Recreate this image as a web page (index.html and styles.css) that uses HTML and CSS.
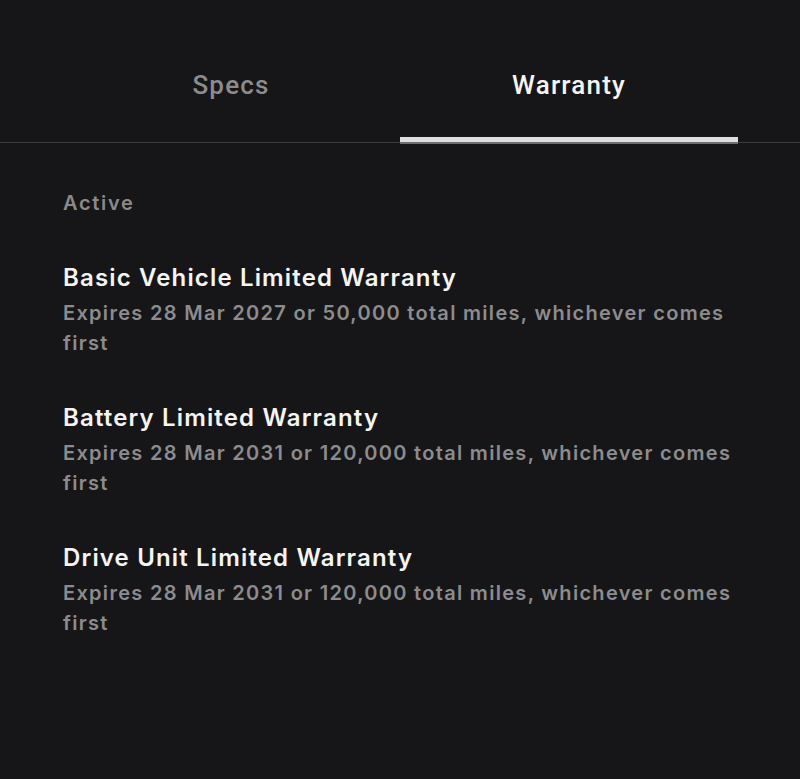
FILE: index.html
```html
<!DOCTYPE html>
<html lang="en">
<head>
  <meta charset="UTF-8">
  <title>Warranty</title>
  <link rel="stylesheet" href="styles.css">
</head>
<body>
  <div class="tabs">
    <div class="tab">Specs</div>
    <div class="tab active">Warranty</div>
  </div>

  <div class="content">
    <div class="section-label">Active</div>

    <div class="warranty">
      <div class="warranty-title">Basic Vehicle Limited Warranty</div>
      <div class="warranty-desc">Expires 28 Mar 2027 or 50,000 total miles, whichever comes first</div>
    </div>

    <div class="warranty">
      <div class="warranty-title">Battery Limited Warranty</div>
      <div class="warranty-desc">Expires 28 Mar 2031 or 120,000 total miles, whichever comes first</div>
    </div>

    <div class="warranty">
      <div class="warranty-title">Drive Unit Limited Warranty</div>
      <div class="warranty-desc">Expires 28 Mar 2031 or 120,000 total miles, whichever comes first</div>
    </div>
  </div>
</body>
</html>
```

FILE: styles.css
```css
body {
  margin: 0;
  background: #161618;
  color: #f2f2f2;
  font-family: Inter, "Liberation Sans", sans-serif;
  height: 779px;
  overflow: hidden;
}

.tabs {
  display: flex;
  padding: 0 62px;
  border-bottom: 1px solid #3a3a3c;
}

.tab {
  flex: 1;
  height: 142px;
  display: flex;
  align-items: center;
  justify-content: center;
  padding-top: 28px;
  box-sizing: border-box;
  font-family: Roboto, sans-serif;
  font-size: 26px;
  font-weight: 500;
  letter-spacing: 1.2px;
  color: #8c8c8e;
  position: relative;
}

.tab.active {
  color: #f4f4f4;
}

.tab.active::after {
  content: "";
  position: absolute;
  left: 0;
  right: 0;
  bottom: -2px;
  height: 5px;
  background: #dedede;
  border-bottom: 2px solid #6e6e70;
}

.content {
  padding: 48px 62px 0 63px;
}

.section-label {
  font-size: 20px;
  font-weight: 600;
  letter-spacing: 1.7px;
  color: #8a8a8c;
  margin-bottom: 48px;
}

.warranty {
  margin-bottom: 45px;
}

.warranty-title {
  font-size: 24px;
  font-weight: 600;
  letter-spacing: 1.15px;
  color: #f4f4f4;
  line-height: 30px;
  margin-bottom: 5px;
}

.warranty-desc {
  font-size: 20px;
  font-weight: 600;
  letter-spacing: 1.3px;
  color: #8c8c8e;
  line-height: 30px;
}
```
